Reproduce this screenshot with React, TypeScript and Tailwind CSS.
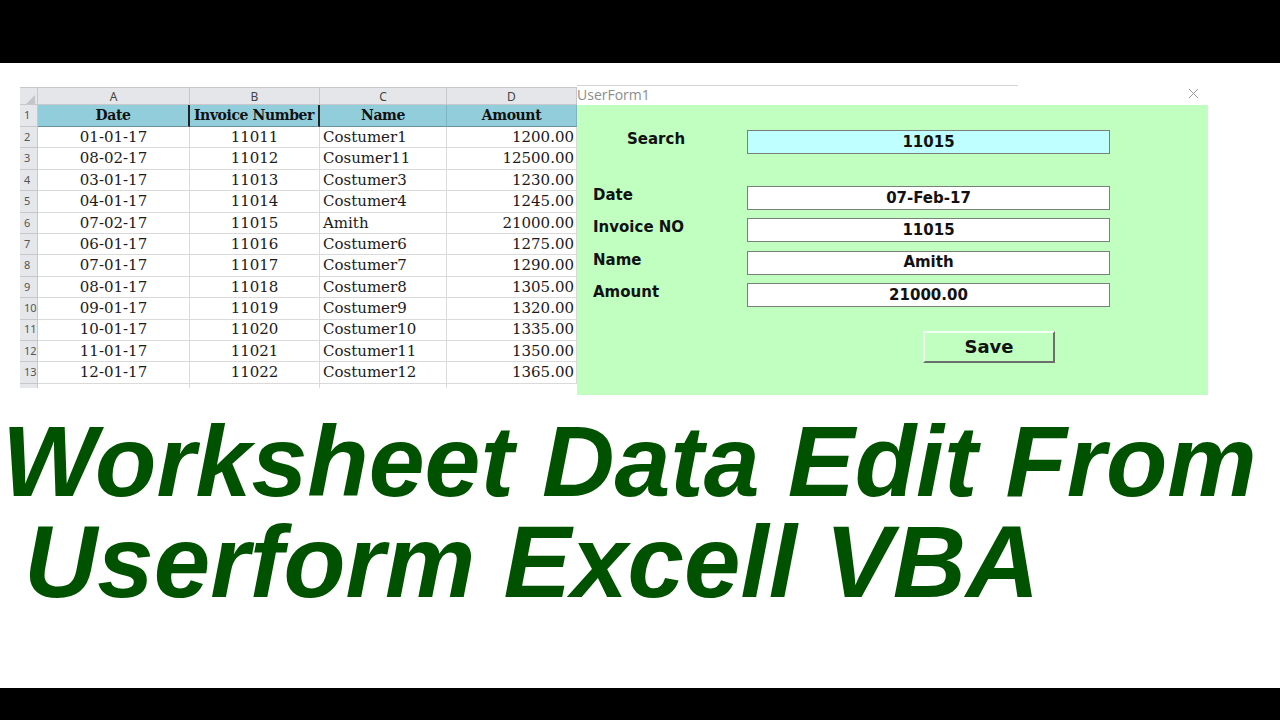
import { X } from "lucide-react";

const rows = [
  ["01-01-17", "11011", "Costumer1", "1200.00"],
  ["08-02-17", "11012", "Cosumer11", "12500.00"],
  ["03-01-17", "11013", "Costumer3", "1230.00"],
  ["04-01-17", "11014", "Costumer4", "1245.00"],
  ["07-02-17", "11015", "Amith", "21000.00"],
  ["06-01-17", "11016", "Costumer6", "1275.00"],
  ["07-01-17", "11017", "Costumer7", "1290.00"],
  ["08-01-17", "11018", "Costumer8", "1305.00"],
  ["09-01-17", "11019", "Costumer9", "1320.00"],
  ["10-01-17", "11020", "Costumer10", "1335.00"],
  ["11-01-17", "11021", "Costumer11", "1350.00"],
  ["12-01-17", "11022", "Costumer12", "1365.00"],
];

const serif = "font-['DejaVu_Serif',serif]";
const tahoma = "font-['DejaVu_Sans',sans-serif] font-bold";

function Sheet() {
  const letterCell =
    "flex items-center justify-center border-r border-[#c6c8cc] text-[12px] text-[#444] font-['Noto_Sans',sans-serif]";
  const numCell =
    "flex items-center border-r border-b border-[#c6c8cc] bg-[#e6e7ea] pl-[4px] text-[11px] text-[#555] font-['Noto_Sans',sans-serif]";
  const cell = "flex items-center border-r border-b border-[#dadada] text-[15px] text-[#1a1a1a] whitespace-nowrap overflow-hidden";

  return (
    <div className="mt-[24px] w-[557px] border-t border-[#c6c8cc]">
      <div className="grid h-[17px] grid-cols-[18px_152px_130px_127px_130px] border-b border-[#c6c8cc] bg-[#e4e6e9]">
        <div className="relative border-r border-[#c6c8cc]">
          <div className="absolute bottom-[2px] right-[2px] h-0 w-0 border-b-[9px] border-l-[9px] border-b-[#c3c5c8] border-l-transparent" />
        </div>
        <div className={letterCell}>A</div>
        <div className={letterCell}>B</div>
        <div className={letterCell}>C</div>
        <div className={letterCell}>D</div>
      </div>

      <div className="grid h-[22px] grid-cols-[18px_152px_130px_127px_130px]">
        <div className={numCell}>1</div>
        {["Date", "Invoice Number", "Name", "Amount"].map((h, i) => (
          <div
            key={h}
            className={`flex items-center justify-center whitespace-nowrap border-b border-[#6a8f99] bg-[#92cddc] text-[14px] tracking-[-0.4px] font-bold text-[#111] ${serif} ${
              i < 2 ? "border-r-2 border-r-[#222]" : "border-r border-r-[#7fb3c0]"
            }`}
          >
            {h}
          </div>
        ))}
      </div>

      {rows.map((r, i) => (
        <div key={i} className={`grid h-[21.4px] grid-cols-[18px_152px_130px_127px_130px] ${serif}`}>
          <div className={numCell}>{i + 2}</div>
          <div className={`${cell} justify-center`}>{r[0]}</div>
          <div className={`${cell} justify-center`}>{r[1]}</div>
          <div className={`${cell} pl-[3px]`}>{r[2]}</div>
          <div className={`${cell} justify-end pr-[2px]`}>{r[3]}</div>
        </div>
      ))}

      <div className="grid h-[4px] grid-cols-[18px_152px_130px_127px_130px]">
        <div className="border-r border-[#c6c8cc] bg-[#e6e7ea]" />
        <div className="border-r border-[#dadada]" />
        <div className="border-r border-[#dadada]" />
        <div className="border-r border-[#dadada]" />
        <div />
      </div>
    </div>
  );
}

function Field({
  label,
  value,
  first,
  indent,
  cyan,
}: {
  label: string;
  value: string;
  first?: boolean;
  indent?: boolean;
  cyan?: boolean;
}) {
  return (
    <div className={`flex items-start ${first ? "" : "mt-[8.3px]"}`}>
      <div
        className={`ml-[16px] mt-[1px] w-[154px] text-[15px] leading-[16px] text-[#111] ${tahoma} ${indent ? "pl-[34px]" : ""}`}
      >
        {label}
      </div>
      <div
        className={`flex h-[24px] w-[363px] items-center justify-center border border-[#7a7f7a] text-[15px] text-[#111] ${tahoma} ${
          cyan ? "bg-[#c0ffff]" : "bg-white"
        }`}
      >
        {value}
      </div>
    </div>
  );
}

function UserForm() {
  return (
    <div className="mt-[22px] w-[631px]">
      <div className="relative h-[20px] bg-white">
        <div className="h-px w-[441px] bg-[#d4d4d4]" />
        <div className="text-[14px] leading-[18px] text-[#8c8c8c] font-['Open_Sans',sans-serif]">UserForm1</div>
        <X className="absolute right-[6px] top-[0px] h-[17px] w-[17px] text-[#8a8a8a]" strokeWidth={1.2} />
      </div>
      <div className="h-[290px] bg-[#c0ffc0] pt-[25px]">
        <Field label="Search" value="11015" first indent cyan />
        <div className="h-[32px]" />
        <Field label="Date" value="07-Feb-17" first />
        <Field label="Invoice NO" value="11015" />
        <Field label="Name" value="Amith" />
        <Field label="Amount" value="21000.00" />
        <div className="mt-[24px] pl-[346px]">
          <button
            className={`flex h-[32px] w-[132px] items-center justify-center border-2 border-t-[#f4fff4] border-l-[#f4fff4] border-b-[#6e6e6e] border-r-[#6e6e6e] bg-[#c0ffc0] text-[18px] text-[#111] ${tahoma}`}
          >
            Save
          </button>
        </div>
      </div>
    </div>
  );
}

export default function App() {
  return (
    <div className="flex h-[720px] w-[1280px] flex-col overflow-hidden bg-white">
      <div className="h-[63px] bg-black" />
      <div className="flex h-[348px] items-start pl-[20px]">
        <Sheet />
        <UserForm />
      </div>
      <div className="whitespace-nowrap font-['Liberation_Sans',Arial,sans-serif] font-bold italic leading-[101px] text-[#005200]">
        <div className="pl-[2px] text-[100.5px]">Worksheet Data Edit From</div>
        <div className="pl-[24px] text-[101.5px]">Userform Excell VBA</div>
      </div>
      <div className="flex-1" />
      <div className="h-[32px] bg-black" />
    </div>
  );
}
